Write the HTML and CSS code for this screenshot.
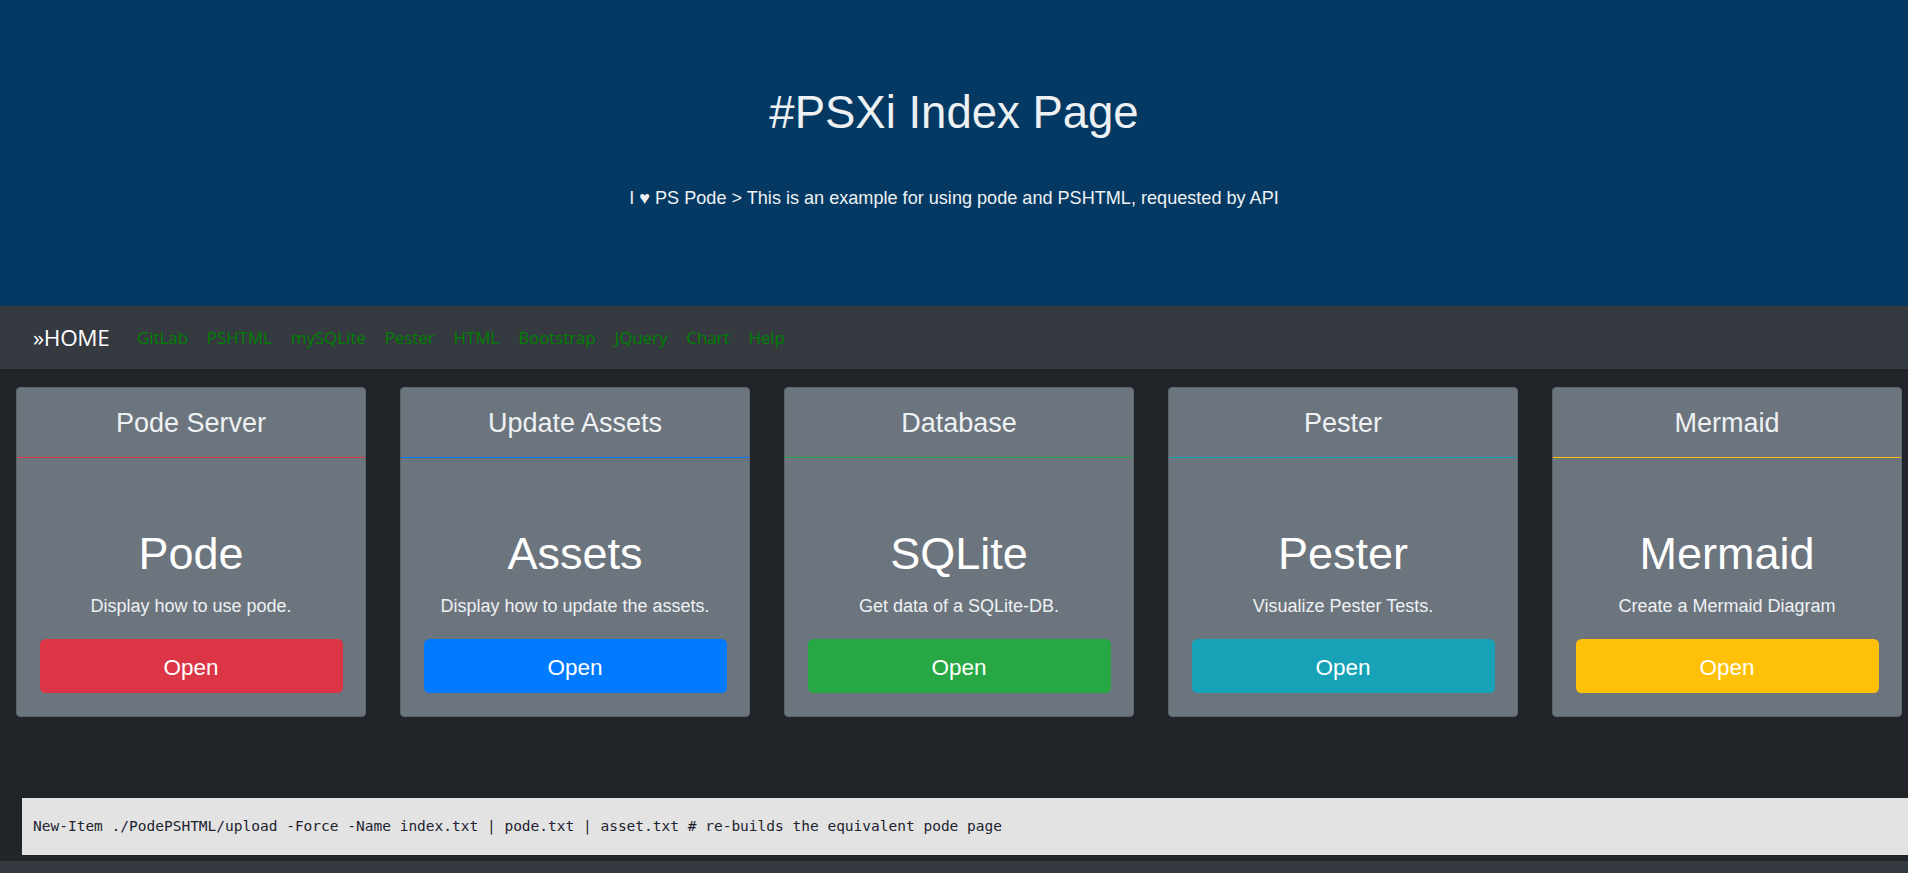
FILE: index.html
```html
<!DOCTYPE html>
<html lang="en">
<head>
<meta charset="utf-8">
<title>#PSXi Index Page</title>
<link rel="stylesheet" href="styles.css">
</head>
<body>
<header class="jumbo">
  <h1 class="jumbo-title">#PSXi Index Page</h1>
  <p class="jumbo-lead">I ♥ PS Pode &gt; This is an example for using pode and PSHTML, requested by API</p>
</header>
<nav class="navbar">
  <a class="brand" href="#">»HOME</a>
  <a class="nav-link" href="#">GitLab</a>
  <a class="nav-link" href="#">PSHTML</a>
  <a class="nav-link" href="#">mySQLite</a>
  <a class="nav-link" href="#">Pester</a>
  <a class="nav-link" href="#">HTML</a>
  <a class="nav-link" href="#">Bootstrap</a>
  <a class="nav-link" href="#">JQuery</a>
  <a class="nav-link" href="#">Chart</a>
  <a class="nav-link" href="#">Help</a>
</nav>
<main class="cards">
  <div class="card">
    <div class="card-header border-danger"><h4 class="card-head-title">Pode Server</h4></div>
    <div class="card-body">
      <h1 class="card-title">Pode</h1>
      <p class="card-text">Display how to use pode.</p>
      <a class="btn btn-danger" href="#">Open</a>
    </div>
  </div>
  <div class="card">
    <div class="card-header border-primary"><h4 class="card-head-title">Update Assets</h4></div>
    <div class="card-body">
      <h1 class="card-title">Assets</h1>
      <p class="card-text">Display how to update the assets.</p>
      <a class="btn btn-primary" href="#">Open</a>
    </div>
  </div>
  <div class="card">
    <div class="card-header border-success"><h4 class="card-head-title">Database</h4></div>
    <div class="card-body">
      <h1 class="card-title">SQLite</h1>
      <p class="card-text">Get data of a SQLite-DB.</p>
      <a class="btn btn-success" href="#">Open</a>
    </div>
  </div>
  <div class="card">
    <div class="card-header border-info"><h4 class="card-head-title">Pester</h4></div>
    <div class="card-body">
      <h1 class="card-title">Pester</h1>
      <p class="card-text">Visualize Pester Tests.</p>
      <a class="btn btn-info" href="#">Open</a>
    </div>
  </div>
  <div class="card">
    <div class="card-header border-warning"><h4 class="card-head-title">Mermaid</h4></div>
    <div class="card-body">
      <h1 class="card-title">Mermaid</h1>
      <p class="card-text">Create a Mermaid Diagram</p>
      <a class="btn btn-warning" href="#">Open</a>
    </div>
  </div>
</main>
<section class="code-wrap">
  <pre class="code">New-Item ./PodePSHTML/upload -Force -Name index.txt | pode.txt | asset.txt # re-builds the equivalent pode page</pre>
</section>
<footer class="footer"></footer>
</body>
</html>
```

FILE: styles.css
```css
* { box-sizing: border-box; }

html, body {
  margin: 0;
  padding: 0;
}

body {
  background: #212529;
  font-family: "Liberation Sans", Arial, sans-serif;
  font-size: 18px;
  line-height: 1.5;
  color: #f8f9fa;
}

.jumbo {
  background: #033962;
  height: 306px;
  padding-top: 86px;
  text-align: center;
}

.jumbo-title {
  margin: 0;
  font-size: 45.5px;
  line-height: 54px;
  font-weight: 400;
  color: #eef1f4;
}

.jumbo-lead {
  margin: 45px 0 0;
  font-size: 18.1px;
  line-height: 27px;
  color: #eef1f4;
}

.navbar {
  height: 63px;
  background: #343a40;
  display: flex;
  align-items: center;
  padding-left: 33px;
  font-family: "Open Sans", "Noto Sans", sans-serif;
}

.brand {
  color: #ffffff;
  text-decoration: none;
  font-size: 22.5px;
  letter-spacing: -0.3px;
  margin-right: 18px;
  line-height: 33px;
}

.nav-link {
  color: #008000;
  text-decoration: none;
  font-size: 17px;
  letter-spacing: -0.1px;
  padding: 0 9.5px;
  line-height: 27px;
}

.cards {
  display: flex;
  gap: 34px;
  padding: 18px 0 0 16px;
}

.card {
  width: 350px;
  flex: 0 0 350px;
  background: #6c757d;
  border: 1px solid rgba(0, 0, 0, 0.125);
  border-radius: 4.5px;
  display: flex;
  flex-direction: column;
}

.card-header {
  padding: 19px 0 17.6px;
  border-bottom: 1px solid transparent;
  text-align: center;
}

.card-head-title {
  margin: 0;
  font-size: 27px;
  line-height: 32.4px;
  font-weight: 400;
  color: #eef1f4;
}

.border-danger { border-bottom-color: #dc3545; }
.border-primary { border-bottom-color: #007bff; }
.border-success { border-bottom-color: #28a745; }
.border-info { border-bottom-color: #17a2b8; }
.border-warning { border-bottom-color: #ffc107; }

.card-body {
  padding: 68.7px 22.5px 22.5px;
  text-align: center;
}

.card-title {
  margin: 0 0 12.3px;
  font-size: 45px;
  line-height: 54px;
  font-weight: 400;
  color: #ffffff;
}

.card-text {
  margin: 0 0 19.5px;
  font-size: 18px;
  line-height: 27px;
  color: #eef1f4;
}

.btn {
  display: block;
  width: 100%;
  height: 54px;
  padding: 11px 18px 7px;
  border-radius: 5.4px;
  font-size: 22.5px;
  line-height: 36px;
  color: #ffffff;
  text-decoration: none;
  text-align: center;
}

.btn-danger { background: #dc3545; }
.btn-primary { background: #007bff; }
.btn-success { background: #28a745; }
.btn-info { background: #17a2b8; }
.btn-warning { background: #ffc107; }

.code-wrap {
  padding: 81px 0 0 22px;
}

.code {
  margin: 0;
  height: 57px;
  display: flex;
  align-items: center;
  padding-left: 11px;
  background: #e3e3e3;
  color: #1d2330;
  font-family: "DejaVu Sans Mono", "Liberation Mono", monospace;
  font-size: 14.5px;
  line-height: 20px;
}

.footer {
  margin-top: 6px;
  height: 60px;
  background: #343a40;
}
```
